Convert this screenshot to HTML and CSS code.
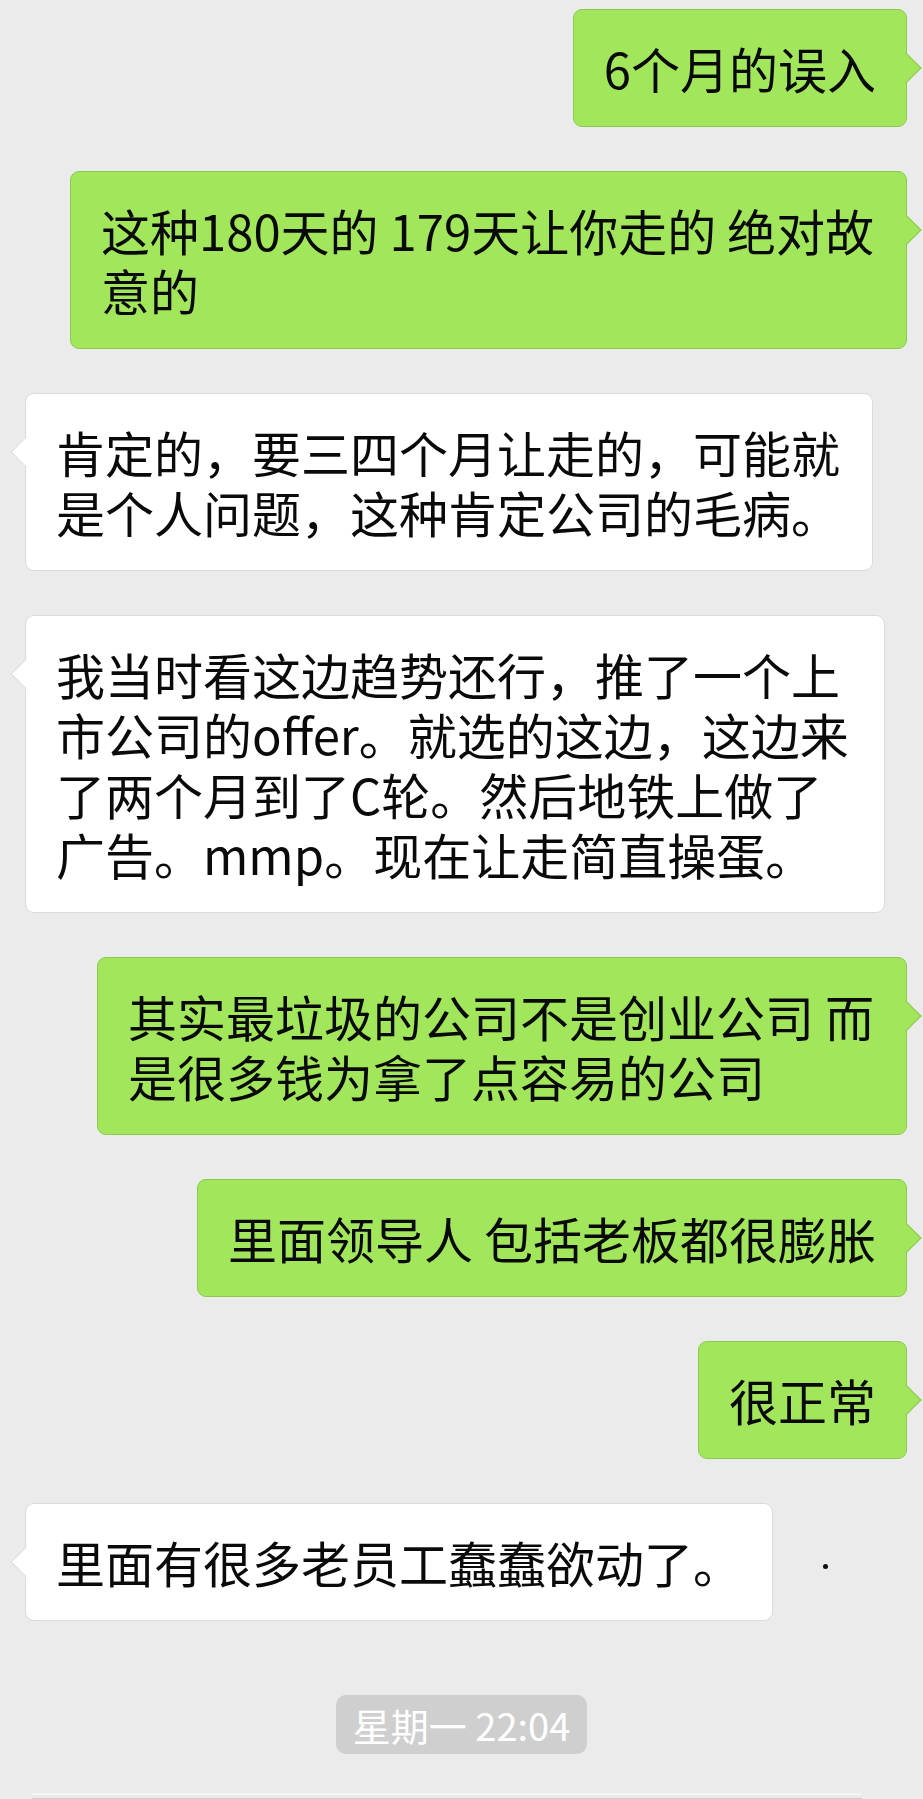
FILE: index.html
```html
<!DOCTYPE html>
<html lang="zh-CN">
<head>
    <meta charset="UTF-8">
    <meta name="viewport" content="width=device-width, initial-scale=1.0">
    <title>聊天记录</title>
    <link rel="stylesheet" href="styles.css">
</head>
<body>
    <main class="chat">
        <div class="row mine">
            <div class="bubble green">6个月的误入</div>
        </div>
        <div class="row mine">
            <div class="bubble green">这种180天的 179天让你走的 绝对故意的</div>
        </div>
        <div class="row theirs">
            <div class="bubble white">肯定的，要三四个月让走的，可能就是个人问题，这种肯定公司的毛病。</div>
        </div>
        <div class="row theirs">
            <div class="bubble white wide">我当时看这边趋势还行，推了一个上市公司的offer。就选的这边，这边来了两个月到了C轮。然后地铁上做了广告。mmp。现在让走简直操蛋。</div>
        </div>
        <div class="row mine">
            <div class="bubble green tight">其实最垃圾的公司不是创业公司 而是很多钱为拿了点容易的公司</div>
        </div>
        <div class="row mine">
            <div class="bubble green">里面领导人 包括老板都很膨胀</div>
        </div>
        <div class="row mine">
            <div class="bubble green">很正常</div>
        </div>
        <div class="row theirs">
            <div class="bubble white">里面有很多老员工蠢蠢欲动了。</div>
            <span class="dot"></span>
        </div>
        <div class="time">星期一 22:04</div>
        <div class="input-edge"></div>
    </main>
</body>
</html>
```
FILE: styles.css
```css
/* Chat page */
body {
    margin: 0;
    padding: 0;
    background-color: #ebebeb;
    font-family: "Noto Sans CJK SC", "Noto Sans", sans-serif;
    color: #0a0a0a;
}

.chat {
    display: flex;
    flex-direction: column;
    gap: 44px;
    padding-top: 9px;
}

.row {
    display: flex;
    align-items: center;
}

.row.mine {
    justify-content: flex-end;
    padding-right: 16px;
}

.row.theirs {
    justify-content: flex-start;
    padding-left: 25px;
}

.bubble {
    position: relative;
    padding: 28px 30px;
    font-size: 49px;
    line-height: 60px;
    border-radius: 9px;
    word-break: break-all;
}

.bubble.green {
    max-width: 775px;
    background-color: #a2e65c;
    border: 1px solid #8cc94f;
}

.bubble.green.tight {
    max-width: 748px;
}

.bubble.white {
    max-width: 786px;
    background-color: #ffffff;
    border: 1px solid #dadada;
}

.bubble.white.wide {
    max-width: 798px;
}

/* the little tails */
.bubble::after {
    content: "";
    position: absolute;
    top: 47px;
    width: 21px;
    height: 21px;
    transform: rotate(45deg);
}

.bubble.green::after {
    right: -11px;
    background-color: #a2e65c;
    border-top: 1px solid #8cc94f;
    border-right: 1px solid #8cc94f;
}

.bubble.white::after {
    left: -11px;
    background-color: #ffffff;
    border-left: 1px solid #dadada;
    border-bottom: 1px solid #dadada;
}

.dot {
    width: 5px;
    height: 5px;
    margin-left: 50px;
    margin-top: 8px;
    border-radius: 50%;
    background-color: #111;
}

.time {
    align-self: center;
    margin-top: 30px;
    padding: 4px 17px;
    font-size: 38px;
    line-height: 51px;
    color: #ffffff;
    background-color: #cfcfcf;
    border-radius: 10px;
}

.input-edge {
    margin: -5px 61px 0 32px;
    height: 3px;
    border-top: 2px solid #f4f4f4;
    border-bottom: 2px solid #cccccc;
}
```
